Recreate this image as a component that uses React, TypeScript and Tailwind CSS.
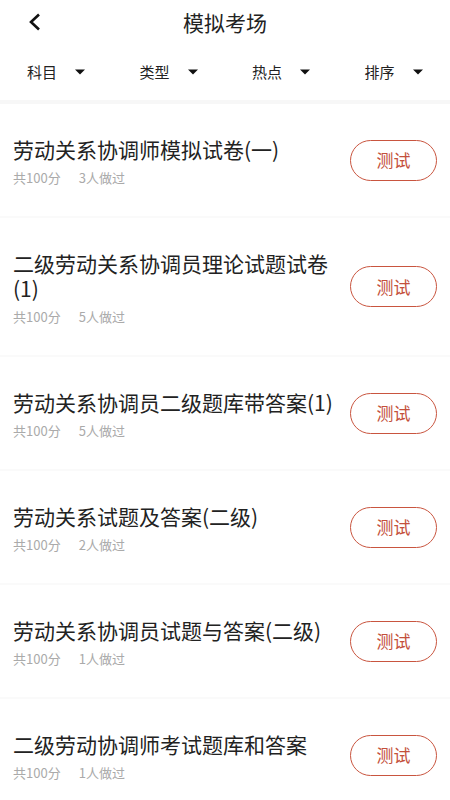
import React from 'react';

const font = { fontFamily: '"Noto Sans CJK SC", "Noto Sans", sans-serif' };

const filters = ['科目', '类型', '热点', '排序'];

const papers = [
  { title: '劳动关系协调师模拟试卷(一)', people: 3 },
  { title: '二级劳动关系协调员理论试题试卷(1)', people: 5 },
  { title: '劳动关系协调员二级题库带答案(1)', people: 5 },
  { title: '劳动关系试题及答案(二级)', people: 2 },
  { title: '劳动关系协调员试题与答案(二级)', people: 1 },
  { title: '二级劳动协调师考试题库和答案', people: 1 },
];

function Caret() {
  return (
    <svg width="10" height="6" viewBox="0 0 10 6" className="ml-[18px]">
      <path d="M0 0.5h10L5 5.5z" fill="#111" />
    </svg>
  );
}

export default function App() {
  return (
    <div className="w-[450px] h-[800px] overflow-hidden bg-white" style={font}>
      <div className="relative h-[44px] flex items-center justify-center">
        <svg width="14" height="18" viewBox="0 0 14 18" className="absolute left-[28px] top-[13px]">
          <path d="M11 1.5L3 9l8 7.5" fill="none" stroke="#111" strokeWidth="2.6" />
        </svg>
        <span className="text-[21px] leading-[28px] text-[#222]">模拟考场</span>
      </div>
      <div className="flex h-[56px] items-center">
        {filters.map((f) => (
          <div key={f} className="flex-1 flex items-center pl-[27px]">
            <span className="text-[15px] text-[#222]">{f}</span>
            <Caret />
          </div>
        ))}
      </div>
      <div className="h-[4px] bg-[#f7f7f7]" />
      {papers.map((p, i) => (
        <div key={i} className="flex items-center border-b-2 border-[#fafafa] pl-[13px] pr-[13px]">
          <div className="flex-1 pt-[33px] pb-[29px] pr-[8px]">
            <div className="text-[21px] leading-[25px] text-[#222]">{p.title}</div>
            <div className="mt-[7px] flex text-[13px] leading-[18px] text-[#aaa]">
              <span>共100分</span>
              <span className="ml-[18px]">{p.people}人做过</span>
            </div>
          </div>
          <button className="w-[87px] h-[41px] shrink-0 rounded-full border-[1.5px] border-[#c9553f] text-[17px] text-[#c4503b]">
            测试
          </button>
        </div>
      ))}
    </div>
  );
}
